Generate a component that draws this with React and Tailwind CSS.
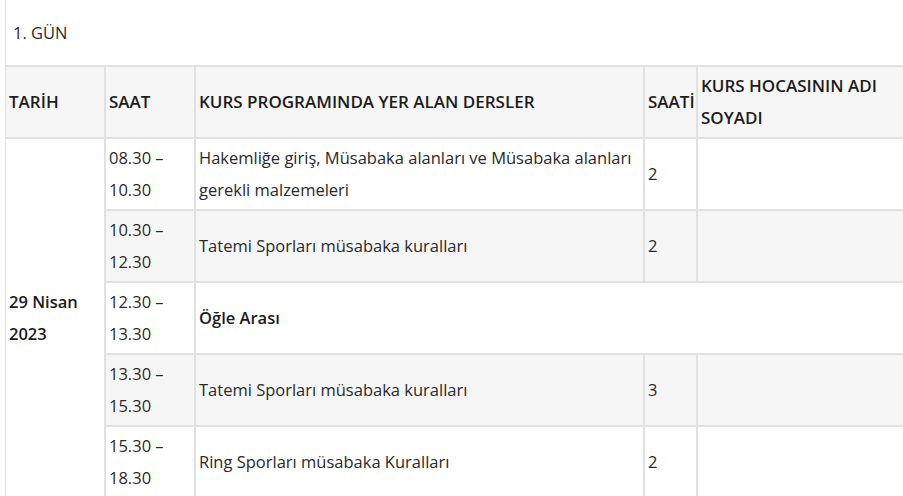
import React from 'react';

const rows = [
  { saat: ['08.30 –', '10.30'], ders: ['Hakemliğe giriş, Müsabaka alanları ve Müsabaka alanları', 'gerekli malzemeleri'], sure: '2' },
  { saat: ['10.30 –', '12.30'], ders: ['Tatemi Sporları müsabaka kuralları'], sure: '2' },
  { saat: ['12.30 –', '13.30'], ara: 'Öğle Arası' },
  { saat: ['13.30 –', '15.30'], ders: ['Tatemi Sporları müsabaka kuralları'], sure: '3' },
  { saat: ['15.30 –', '18.30'], ders: ['Ring Sporları müsabaka Kuralları'], sure: '2' },
];

const cell = 'border border-[#e1e1e1] p-[3px] align-middle text-left';

const Lines = ({ items }) =>
  items.map((t, i) => (
    <React.Fragment key={i}>
      {i > 0 && <br />}
      {t}
    </React.Fragment>
  ));

const App = () => {
  return (
    <div
      className="w-[903px] h-[496px] overflow-hidden bg-white text-[#2a2a2a] text-[16.5px] leading-8"
      style={{ fontFamily: '"Open Sans", "Noto Sans", sans-serif' }}
    >
      <table className="ml-[5px] -mt-px w-[957px] table-fixed border-separate border-spacing-0">
        <colgroup>
          <col className="w-[100px]" />
          <col className="w-[90px]" />
          <col className="w-[449px]" />
          <col className="w-[53px]" />
          <col className="w-[265px]" />
        </colgroup>
        <tbody>
          <tr>
            <td colSpan={5} className={`${cell} h-[67px] pl-[7px]`}>
              1. GÜN
            </td>
          </tr>
          <tr className="bg-[#f6f6f6] text-[#1c1c1c] text-[17px]">
            <th className={`${cell} font-semibold`}>TARİH</th>
            <th className={`${cell} font-semibold`}>SAAT</th>
            <th className={`${cell} font-semibold`}>KURS PROGRAMINDA YER ALAN DERSLER</th>
            <th className={`${cell} font-semibold whitespace-nowrap`}>SAATİ</th>
            <th className={`${cell} font-semibold`}>
              KURS HOCASININ ADI
              <br />
              SOYADI
            </th>
          </tr>
          {rows.map((r, i) => (
            <tr key={i} className={i % 2 === 1 ? 'bg-[#f6f6f6]' : 'bg-white'}>
              {i === 0 && (
                <td rowSpan={5} className={`${cell} bg-white font-semibold text-[#1c1c1c]`}>
                  29 Nisan
                  <br />
                  2023
                </td>
              )}
              <td className={`${cell} h-[72px]`}>
                <Lines items={r.saat} />
              </td>
              {r.ara ? (
                <td colSpan={3} className={`${cell} font-semibold text-[#1c1c1c]`}>
                  {r.ara}
                </td>
              ) : (
                <>
                  <td className={cell}>
                    <Lines items={r.ders} />
                  </td>
                  <td className={cell}>{r.sure}</td>
                  <td className={cell}></td>
                </>
              )}
            </tr>
          ))}
        </tbody>
      </table>
    </div>
  );
};

export default App;
